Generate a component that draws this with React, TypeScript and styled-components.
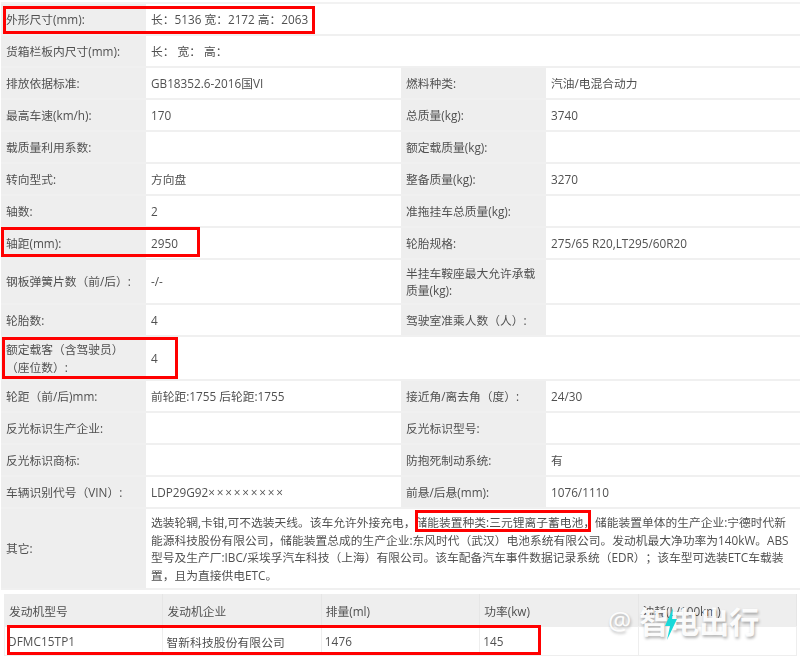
import React from "react";
import styled, { createGlobalStyle } from "styled-components";

const Global = createGlobalStyle`
  html, body { margin: 0; padding: 0; background: #fff; }
`;

const Page = styled.div`
  position: relative;
  width: 800px;
  height: 665px;
  overflow: hidden;
  background: #fff;
  font-family: "Open Sans", "Noto Sans CJK SC", sans-serif;
  font-size: 11.75px;
  color: #505050;
  text-spacing-trim: space-all;
`;

const Sheet = styled.div`
  display: flex;
  flex-direction: column;
  gap: 4px;
  padding: 2px 0 0 1px;
  filter: blur(0.3px);
`;

const SpecTable = styled.table`
  width: 799px;
  table-layout: fixed;
  border-collapse: separate;
  border-spacing: 0;
  border-top: 2px solid #f2f2f2;
`;

const Row = styled.tr<{ $h?: number }>`
  height: ${(p) => p.$h ?? 32}px;
`;

const Label = styled.td`
  box-sizing: border-box;
  background: #eee;
  padding: 1px 4px 0 5px;
  line-height: 17.5px;
  border-bottom: 2px solid #f0f0f0;
  overflow: hidden;
`;

const Value = styled.td`
  box-sizing: border-box;
  background: #fff;
  padding: 1px 5px 0 5px;
  line-height: 17.5px;
  white-space: nowrap;
  border-bottom: 2px solid #f0f0f0;
`;

const TextLine = styled.div`
  white-space: nowrap;
`;

const Masked = styled.span`
  letter-spacing: 1.8px;
`;

const EngineTable = styled.table`
  width: 793px;
  margin-left: 3px;
  table-layout: fixed;
  border-collapse: collapse;
`;

const HeadCell = styled.th`
  box-sizing: border-box;
  height: 32px;
  background: #eee;
  border: 1px solid #eee;
  border-right-color: #e6e6e6;
  font-weight: 400;
  text-align: left;
  padding: 0 4px;
`;

const BodyCell = styled.td`
  box-sizing: border-box;
  height: 29px;
  border: 1px solid #eee;
  padding: 0 3px;
  white-space: nowrap;
  letter-spacing: 0.1px;
`;

const RedBox = styled.div<{ $x: number; $y: number; $w: number; $h: number }>`
  position: absolute;
  left: ${(p) => p.$x}px;
  top: ${(p) => p.$y}px;
  width: ${(p) => p.$w}px;
  height: ${(p) => p.$h}px;
  box-sizing: border-box;
  border: 3px solid #f00;
`;

const Watermark = styled.div`
  position: absolute;
  left: 608px;
  top: 602px;
  display: flex;
  align-items: center;
  gap: 8px;
  color: rgba(255, 255, 255, 0.95);
  font-family: "Noto Sans CJK SC", sans-serif;
  font-weight: 700;
  text-shadow: 1px 2px 3px rgba(0, 0, 0, 0.3);
  white-space: nowrap;
`;

const At = styled.span`
  font-family: "Open Sans", sans-serif;
  font-weight: 400;
  font-size: 26px;
  line-height: 36px;
`;

const Brand = styled.span`
  font-size: 30px;
  line-height: 36px;
`;

const Bolt = styled.svg`
  position: absolute;
  left: 664px;
  top: 608px;
`;

const specRows: [string, string, string, string][] = [
  ["排放依据标准:", "GB18352.6-2016国VI", "燃料种类:", "汽油/电混合动力"],
  ["最高车速(km/h):", "170", "总质量(kg):", "3740"],
  ["载质量利用系数:", "", "额定载质量(kg):", ""],
  ["转向型式:", "方向盘", "整备质量(kg):", "3270"],
  ["轴数:", "2", "准拖挂车总质量(kg):", ""],
  ["轴距(mm):", "2950", "轮胎规格:", "275/65 R20,LT295/60R20"],
];

const note = [
  "选装轮辋,卡钳,可不选装天线。该车允许外接充电，储能装置种类:三元锂离子蓄电池，储能装置单体的生产企业:宁德时代新",
  "能源科技股份有限公司，储能装置总成的生产企业:东风时代（武汉）电池系统有限公司。发动机最大净功率为140kW。ABS",
  "型号及生产厂:IBC/采埃孚汽车科技（上海）有限公司。该车配备汽车事件数据记录系统（EDR）；该车型可选装ETC车载装",
  "置，且为直接供电ETC。",
];

const Pair = ({ r, h }: { r: [string, React.ReactNode, string, string]; h?: number }) => (
  <Row $h={h}>
    <Label>{r[0]}</Label>
    <Value>{r[1]}</Value>
    <Label>{r[2]}</Label>
    <Value>{r[3]}</Value>
  </Row>
);

export default function App() {
  return (
    <Page>
      <Global />
      <Sheet>
        <SpecTable>
          <colgroup>
            <col width="145" />
            <col width="255" />
            <col width="145" />
            <col width="254" />
          </colgroup>
          <tbody>
            <Row>
              <Label>外形尺寸(mm):</Label>
              <Value colSpan={3}>长：5136 宽：2172 高：2063</Value>
            </Row>
            <Row>
              <Label>货箱栏板内尺寸(mm):</Label>
              <Value colSpan={3}>长： 宽： 高：</Value>
            </Row>
            {specRows.map((r) => (
              <Pair key={r[0]} r={r} />
            ))}
            <Pair r={["钢板弹簧片数（前/后）:", "-/-", "半挂车鞍座最大允许承载质量(kg):", ""]} h={45} />
            <Pair r={["轮胎数:", "4", "驾驶室准乘人数（人）:", ""]} />
            <Row $h={44}>
              <Label>
                <TextLine>额定载客（含驾驶员）</TextLine>
                <TextLine>（座位数）:</TextLine>
              </Label>
              <Value colSpan={3}>4</Value>
            </Row>
            <Pair r={["轮距（前/后)mm:", "前轮距:1755 后轮距:1755", "接近角/离去角（度）:", "24/30"]} />
            <Pair r={["反光标识生产企业:", "", "反光标识型号:", ""]} />
            <Pair r={["反光标识商标:", "", "防抱死制动系统:", "有"]} />
            <Pair
              r={[
                "车辆识别代号（VIN）:",
                <>
                  LDP29G92<Masked>×××××××××</Masked>
                </>,
                "前悬/后悬(mm):",
                "1076/1110",
              ]}
            />
            <Row $h={81}>
              <Label>其它:</Label>
              <Value colSpan={3}>
                {note.map((line) => (
                  <TextLine key={line}>{line}</TextLine>
                ))}
              </Value>
            </Row>
          </tbody>
        </SpecTable>
        <EngineTable>
          <thead>
            <tr>
              <HeadCell>发动机型号</HeadCell>
              <HeadCell>发动机企业</HeadCell>
              <HeadCell>排量(ml)</HeadCell>
              <HeadCell>功率(kw)</HeadCell>
              <HeadCell>油耗(L/100km)</HeadCell>
            </tr>
          </thead>
          <tbody>
            <tr>
              <BodyCell>DFMC15TP1</BodyCell>
              <BodyCell>智新科技股份有限公司</BodyCell>
              <BodyCell>1476</BodyCell>
              <BodyCell>145</BodyCell>
              <BodyCell />
            </tr>
          </tbody>
        </EngineTable>
      </Sheet>
      <RedBox $x={3} $y={6} $w={312} $h={28} />
      <RedBox $x={1} $y={227} $w={199} $h={30} />
      <RedBox $x={2} $y={337} $w={176} $h={42} />
      <RedBox $x={415} $y={510} $w={176} $h={22} />
      <RedBox $x={7} $y={625} $w={534} $h={30} />
      <Watermark>
        <At>@</At>
        <Brand>智电出行</Brand>
      </Watermark>
      <Bolt width="14" height="32" viewBox="0 0 14 32">
        <path d="M9 0 L1 18 L6 18 L3 32 L13 11 L8 11 Z" fill="#19d9d9" />
      </Bolt>
    </Page>
  );
}
